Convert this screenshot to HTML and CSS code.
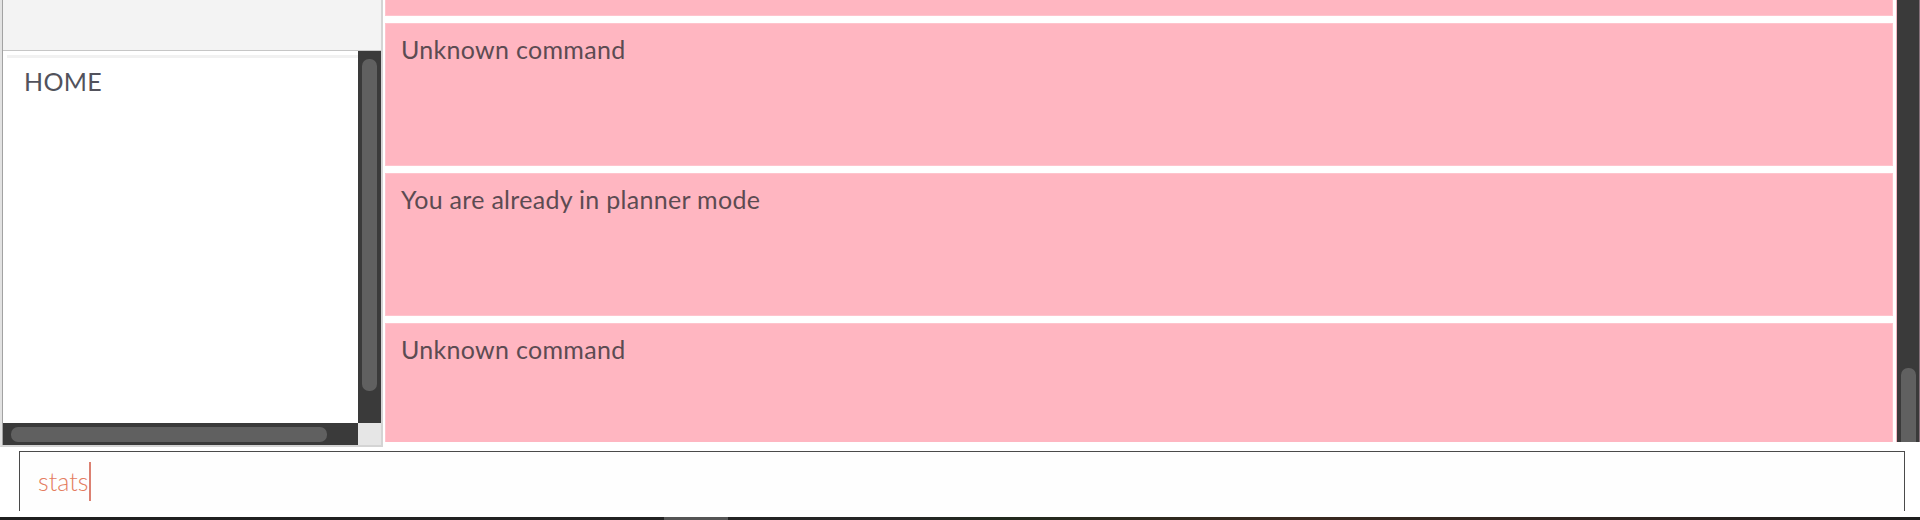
FILE: index.html
```html
<!DOCTYPE html>
<html lang="en">
<head>
<meta charset="utf-8">
<title>Planner</title>
<link rel="stylesheet" href="styles.css">
</head>
<body>
<div class="app">
  <div class="top-row">
    <div class="left-panel">
      <div class="panel-inner">
        <div class="panel-head"></div>
        <div class="mode-list">
          <div class="mode-content">
            <div class="mode-cell">HOME</div>
          </div>
          <div class="vbar"><div class="vthumb"></div></div>
          <div class="hbar"><div class="hthumb"></div></div>
          <div class="corner"></div>
        </div>
      </div>
    </div>
    <div class="results">
      <div class="cards-viewport">
        <div class="cards">
          <div class="card first"></div>
          <div class="card">Unknown command</div>
          <div class="card">You are already in planner mode</div>
          <div class="card">Unknown command</div>
        </div>
      </div>
      <div class="rbar"><div class="rthumb"></div></div>
    </div>
  </div>
  <div class="command-box">
    <div class="command-field"><span class="cmd-text">stats</span><span class="caret"></span></div>
  </div>
  <div class="taskbar"></div>
</div>
</body>
</html>
```

FILE: styles.css
```css
* { box-sizing: border-box; }
html, body {
  margin: 0;
  padding: 0;
  background: #ffffff;
  width: 1920px;
  height: 520px;
  overflow: hidden;
  font-family: "Lato", "Open Sans", sans-serif;
}
.app {
  display: flex;
  flex-direction: column;
  width: 1920px;
  height: 520px;
}
.top-row {
  display: flex;
  height: 447px;
  flex: none;
}
.left-panel {
  width: 383px;
  height: 447px;
  flex: none;
  border-left: 2px solid #e2e2e2;
  border-right: 2px solid #d4d4d4;
  border-bottom: 2px solid #d4d4d4;
}
.panel-inner {
  height: 100%;
  border-left: 1px solid #a2a2a2;
  display: flex;
  flex-direction: column;
}
.panel-head {
  height: 51px;
  flex: none;
  background: #f3f3f3;
  border-bottom: 1px solid #c6c6c6;
}
.mode-list {
  flex: 1;
  display: grid;
  grid-template-columns: 1fr 23px;
  grid-template-rows: 1fr 22px;
  background: #ffffff;
}
.mode-content {
  padding: 4px 0 0 4px;
  overflow: hidden;
}
.mode-cell {
  border-top: 3px solid #f1f1f1;
  padding: 8px 0 0 17px;
  font-size: 25px;
  line-height: 30px;
  letter-spacing: 0.3px;
  color: #52525c;
}
.vbar {
  background: #3a3a3a;
  padding: 8px 0 0 4px;
}
.vthumb {
  width: 15px;
  height: 332px;
  background: #606060;
  border-radius: 7px;
}
.hbar {
  background: #3a3a3a;
  padding: 4px 0 0 8px;
}
.hthumb {
  width: 316px;
  height: 15px;
  background: #606060;
  border-radius: 7px;
}
.corner {
  background: #e6e6e6;
}
.results {
  flex: 1;
  display: flex;
  height: 442px;
  padding-left: 2px;
}
.cards-viewport {
  flex: 1;
  overflow: hidden;
  padding-right: 3px;
}
.cards {
  margin-top: -127px;
}
.card {
  height: 143px;
  margin-bottom: 7px;
  background: #ffb6c1;
  border: 1px solid #ffc4cd;
  padding: 10px 15px;
  font-size: 25px;
  line-height: 30px;
  letter-spacing: 0.3px;
  color: #5c4b52;
}
.rbar {
  width: 24px;
  flex: none;
  background: #3a3a3a;
  border-left: 1px solid #f3b8c2;
  border-right: 1px solid #86707a;
  padding: 368px 0 0 4px;
  overflow: hidden;
}
.rthumb {
  width: 15px;
  height: 120px;
  background: #606060;
  border-radius: 7px;
}
.command-box {
  height: 70px;
  flex: none;
  padding: 4px 15px 0 19px;
}
.command-field {
  height: 60px;
  border-top: 1px solid #4a4a4a;
  border-left: 1px solid #4a4a4a;
  border-right: 1px solid #4a4a4a;
  padding: 14px 0 0 18px;
  display: flex;
  align-items: flex-start;
  background: #fefefe;
}
.cmd-text {
  font-size: 25px;
  line-height: 30px;
  color: #e47c5f;
  font-weight: 300;
}
.caret {
  width: 2px;
  height: 39px;
  margin-top: -4px;
  margin-left: 1px;
  background: #dc8172;
}
.taskbar {
  height: 3px;
  flex: none;
  background: linear-gradient(to right, #1f1f1f 0px, #232323 664px, #555555 664px, #555555 728px, #242424 728px, #262626 900px, #222a1e 1000px, #3a2a20 1300px, #2e2420 1600px, #1e1e1e 1920px);
}
```
